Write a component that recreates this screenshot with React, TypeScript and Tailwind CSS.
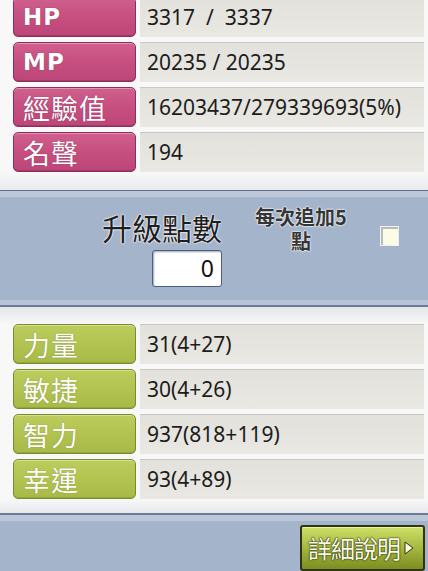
import React from "react";

const pinkLabel =
  "w-[123px] h-full rounded-[5px] border-[1.5px] border-[#8e2d5b] bg-gradient-to-b from-[#d0608e] via-[#c64f80] to-[#bc4677] shadow-[inset_0_1px_0_#e591b3,inset_0_-1px_0_#a33a69] flex items-center pl-[9px] text-white";
const greenLabel =
  "w-[123px] h-full rounded-[5px] border-[1.5px] border-[#7a8a2e] bg-gradient-to-b from-[#bccd5e] via-[#b2c350] to-[#a7b947] shadow-[inset_0_1px_0_#d6e38e,inset_0_-1px_0_#95a63a] flex items-center pl-[9px] text-white";
const valueBox =
  "flex-1 h-full bg-gradient-to-b from-[#e3e1db] to-[#eae8e2] border-t border-[#c9c8c2] flex items-center pl-[7px] text-[21px] text-[#1c1c1c] leading-none whitespace-pre";

const valFont = { fontFamily: '"Noto Sans", "Open Sans", sans-serif' };
const cjk = { fontFamily: '"Noto Sans CJK TC", "Noto Sans CJK SC", sans-serif' };

function Row({ label, value, green, latin }: { label: string; value: string; green?: boolean; latin?: boolean }) {
  return (
    <div className="flex h-[40px] pl-[13px] pr-[4px] gap-[4px]">
      <div className={green ? greenLabel : pinkLabel}>
        {latin ? (
          <span
            className="text-[23px] font-bold tracking-[1px] leading-none [text-shadow:0_0_1px_#7a2048]"
            style={{ fontFamily: '"DejaVu Sans", sans-serif' }}
          >
            {label}
          </span>
        ) : (
          <span
            className={
              "text-[27px] leading-none tracking-[1px] " +
              (green ? "[text-shadow:0_0_1px_#6c7a25]" : "[text-shadow:0_0_1px_#7a2048]")
            }
            style={cjk}
          >
            {label}
          </span>
        )}
      </div>
      <div className={valueBox} style={valFont}>
        {value}
      </div>
    </div>
  );
}

export default function App() {
  return (
    <div className="w-[428px] h-[571px] overflow-hidden bg-[#f8f8f8] flex flex-col">
      <div className="flex flex-col gap-[5px] -mt-[3px]">
        <Row label="HP" value="3317  /  3337" latin />
        <Row label="MP" value="20235 / 20235" latin />
        <Row label="經驗值" value="16203437/279339693(5%)" />
        <Row label="名聲" value="194" />
      </div>

      <div className="h-[18px] bg-gradient-to-b from-[#f8f8f8] to-[#e9ebee]" />

      <div className="h-[117px] border-t border-[#5f708e] border-b-2 border-b-[#6a7b98] bg-[#a4b4cb] flex flex-col">
        <div className="h-[6px] bg-[#bcc8d9]" />
        <div className="flex flex-1">
          <div className="w-[222px] flex flex-col items-end pt-[15px]">
            <div
              className="text-[30px] leading-none text-[#1e1e1e] [text-shadow:0_0_2px_#fff,0_0_2px_#fff,0_0_1px_#fff]"
              style={cjk}
            >
              升級點數
            </div>
            <div
              className="mt-[8px] w-[70px] h-[37px] bg-white border border-[#4d5d7e] rounded-[3px] shadow-[inset_1px_1px_2px_#9aa6bb] flex items-center justify-end pr-[7px] text-[23px] text-[#111] leading-none"
              style={valFont}
            >
              0
            </div>
          </div>
          <div className="ml-[24px] w-[110px] flex flex-col items-center pt-[9px]">
            <div
              className="text-[20px] font-bold text-[#353535] text-center whitespace-nowrap [text-shadow:0_0_2px_#fff,0_0_2px_#fff,0_0_1px_#fff]"
              style={cjk}
            >
              <div className="leading-[22px] h-[22px]">每次追加5</div>
              <div className="leading-[22px] h-[22px] mt-[2px]">點</div>
            </div>
          </div>
          <div className="ml-[24px] pt-[29px]">
            <div className="w-[19px] h-[20px] bg-[#fbfbe6] border border-[#eef0f4] shadow-[inset_2px_2px_0_#b9bcbf]" />
          </div>
        </div>
        <div className="h-[5px] bg-[#b7c3d6]" />
      </div>

      <div className="h-[17px] bg-gradient-to-b from-[#e4e6ea] to-[#f8f8f8]" />

      <div className="flex flex-col gap-[5px]">
        <Row label="力量" value="31(4+27)" green />
        <Row label="敏捷" value="30(4+26)" green />
        <Row label="智力" value="937(818+119)" green />
        <Row label="幸運" value="93(4+89)" green />
      </div>

      <div className="h-[14px] bg-gradient-to-b from-[#f8f8f8] to-[#e6e8ec]" />

      <div className="flex-1 border-t-2 border-[#6a7b98] bg-[#a4b4cb] flex flex-col">
        <div className="h-[6px] bg-[#bcc8d9]" />
        <div className="flex justify-end pr-[3px] pt-[4px]">
          <div className="w-[125px] h-[46px] rounded-[3px] border-2 border-[#2e3510] bg-gradient-to-b from-[#cfe06a] via-[#a6b83c] to-[#7d8d22] shadow-[inset_0_1px_0_#e8f2a4] flex items-center pl-[6px] gap-[3px] whitespace-nowrap">
            <span
              className="text-[24px] leading-none text-[#fbfbe8] tracking-[-1px] [text-shadow:0_0_1px_#2e3510,0_0_2px_#2e3510,0_0_1px_#2e3510]"
              style={cjk}
            >
              詳細說明
            </span>
            <svg width="12" height="16" viewBox="0 0 12 16">
              <path d="M2 2 L10 8 L2 14 Z" fill="#fbfbe8" stroke="#2e3510" strokeWidth="1" />
            </svg>
          </div>
        </div>
      </div>
    </div>
  );
}
